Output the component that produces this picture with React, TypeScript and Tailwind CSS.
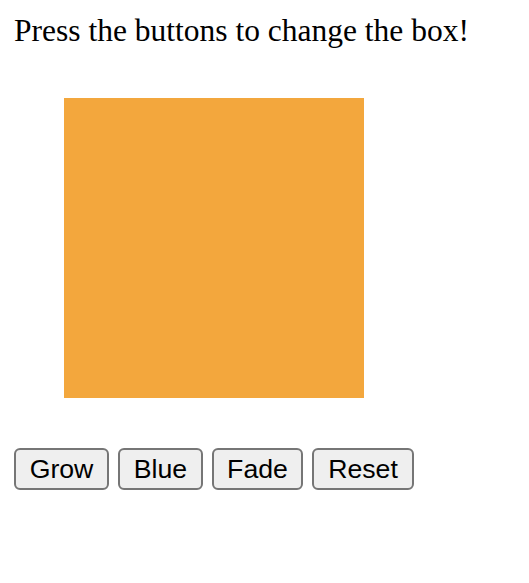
import React from "react";

const buttons = [
  { label: "Grow", width: "w-[95px]" },
  { label: "Blue", width: "w-[85px]" },
  { label: "Fade", width: "w-[91px]" },
  { label: "Reset", width: "w-[102px]" },
];

export default function App() {
  return (
    <div className="min-h-screen bg-white px-[14px] pt-[12px]">
      <p className="text-[31.5px] leading-[37px] text-black font-['Liberation_Serif',_'Times_New_Roman',_serif]">
        Press the buttons to change the box!
      </p>

      <div className="mt-[49px] ml-[50px] w-[300px] h-[300px] bg-[#f3a73d]" />

      <div className="mt-[50px] flex gap-[9px]">
        {buttons.map(({ label, width }) => (
          <button
            key={label}
            type="button"
            className={`${width} h-[42px] flex items-center justify-center rounded-[6px] border-2 border-[#767676] bg-[#efefef] text-[26.67px] text-black font-['Liberation_Sans',_Arial,_sans-serif]`}
          >
            {label}
          </button>
        ))}
      </div>
    </div>
  );
}
